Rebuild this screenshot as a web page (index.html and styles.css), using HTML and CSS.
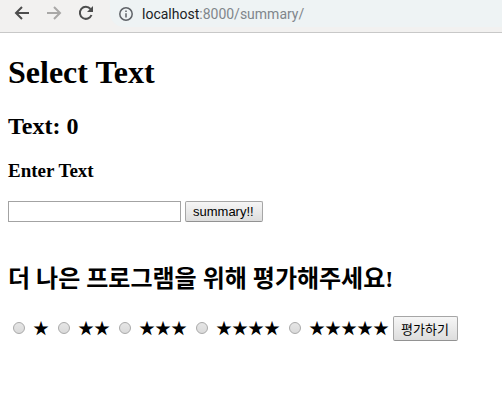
FILE: index.html
```
<!DOCTYPE html>
<html lang="ko">
<head>
<meta charset="utf-8">
<title>Select Text</title>
<link rel="stylesheet" href="styles.css">
</head>
<body>
<header class="toolbar">
  <button class="nav" type="button" aria-label="Back"><svg viewBox="0 0 16 16"><path d="M15 8H2M8 2L2 8l6 6"/></svg></button>
  <button class="nav nav-off" type="button" aria-label="Forward" disabled><svg viewBox="0 0 16 16"><path d="M1 8h13M8 2l6 6-6 6"/></svg></button>
  <button class="nav" type="button" aria-label="Reload"><svg viewBox="0 0 16 16"><path d="M13.5 10A6 6 0 1 1 12.5 4"/><path class="solid" d="M15 1v6H9z"/></svg></button>
  <div class="address">
    <svg class="info" viewBox="0 0 14 14"><circle cx="7" cy="7" r="6.2"/><path d="M7 6.2v4.3M7 3.5v1.5"/></svg>
    <span class="url"><span class="host">localhost</span>:8000/summary/</span>
  </div>
</header>
<main class="page">
  <h1>Select Text</h1>
  <h2>Text: 0</h2>
  <h3><label for="text">Enter Text</label></h3>
  <form class="entry">
    <input class="field" id="text" type="text">
    <button class="push" type="button">summary!!</button>
  </form>
  <h2 class="rate-title">더 나은 프로그램을 위해 평가해주세요!</h2>
  <form class="rating">
    <input type="radio" name="rate" id="r1"> <label for="r1">★</label>
    <input type="radio" name="rate" id="r2"> <label for="r2">★★</label>
    <input type="radio" name="rate" id="r3"> <label for="r3">★★★</label>
    <input type="radio" name="rate" id="r4"> <label for="r4">★★★★</label>
    <input type="radio" name="rate" id="r5"> <label for="r5">★★★★★</label>
    <button class="push push-tall" type="button">평가하기</button>
  </form>
</main>
</body>
</html>
```
FILE: styles.css
```
* { box-sizing: border-box; }
body {
  margin: 0;
  background: #fff;
  color: #000;
  font-family: "Liberation Serif", "Noto Sans CJK KR", serif;
  font-size: 16px;
}
.toolbar {
  display: flex;
  align-items: flex-start;
  gap: 16px;
  height: 33px;
  padding-left: 14px;
  background: #f2f1f0;
  border-bottom: 1px solid #c8c8c8;
}
.nav {
  width: 16px;
  height: 16px;
  margin-top: 5px;
  padding: 0;
  border: 0;
  background: none;
}
.nav svg { display: block; width: 16px; height: 16px; }
.nav path { fill: none; stroke: #4d4d4d; stroke-width: 2; }
.nav .solid { fill: #4d4d4d; stroke: none; }
.nav-off path { stroke: #a9a8a7; }
.address {
  flex: 1;
  display: flex;
  align-items: center;
  gap: 9px;
  height: 27px;
  padding-left: 9px;
  border-radius: 0 0 0 14px;
  background: #eef3f4;
}
.info { width: 14px; height: 14px; fill: none; stroke: #5f6368; stroke-width: 1.5; }
.url { font: 14px/20px Roboto, "Noto Sans", sans-serif; color: #80868b; }
.host { color: #202124; }
.page { padding: 21px 8px; }
h1 { margin: 0 0 22px; font-size: 32px; line-height: 36px; }
h2 { margin: 0 0 20px; font-size: 24px; line-height: 28px; }
h3 { margin: 0 0 19px; font-size: 19px; line-height: 22px; }
.entry { display: flex; gap: 4px; }
.field {
  width: 173px;
  height: 21px;
  padding: 1px 2px;
  border: 1px solid #a3a3a3;
  background: #fff;
  font: 13px "Liberation Sans", sans-serif;
}
.push {
  height: 21px;
  padding: 0 8px 0 7px;
  border: 1px solid #a6a6a6;
  border-bottom-color: #929292;
  border-radius: 2px;
  background: linear-gradient(#f6f6f6, #dddddd);
  color: #000;
  font: 13px "Liberation Sans", "Noto Sans CJK KR", sans-serif;
}
.push-tall { height: 25px; }
.rate-title { margin: 39px 0 18px; line-height: 36px; }
.rating { line-height: 24px; font-family: "Liberation Serif", "Noto Sans CJK KR", serif; }
.rating label { font-family: "Noto Sans CJK KR", sans-serif; }
.rating input {
  appearance: none;
  width: 12px;
  height: 12px;
  margin: 3px 4px 0 5px;
  border: 1px solid #a9a9a9;
  border-radius: 50%;
  background: linear-gradient(#e6e6e6, #dadada);
}
```
